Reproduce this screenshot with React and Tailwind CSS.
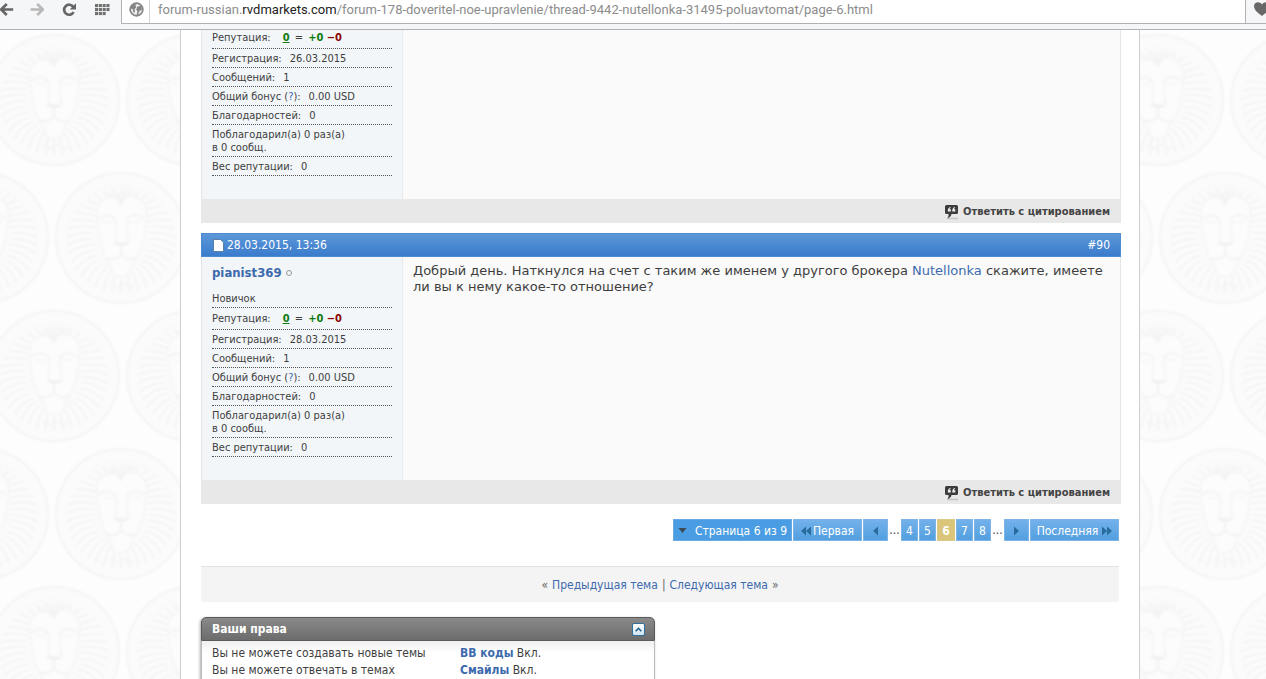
const RAYS = Array.from({ length: 76 }, (_, i) => {
  const a = (i / 76) * Math.PI * 2;
  const x = Math.sin(a);
  const y = -Math.cos(a);
  return {
    d: `M${(x * 29).toFixed(1)} ${(y * 36 - 2).toFixed(1)} Q${(x * 42).toFixed(1)} ${(y * 40 - 3).toFixed(1)} ${(x * 54).toFixed(1)} ${(y * 52 + 3).toFixed(1)}`,
    dark: i % 2 === 0,
  };
});

function Lions() {
  return (
    <svg className="absolute inset-0 size-full" aria-hidden="true">
      <defs>
        <filter id="soft" x="-10%" y="-10%" width="120%" height="120%">
          <feGaussianBlur stdDeviation="0.9" />
        </filter>
        <g id="lion" fill="none" strokeLinecap="round" filter="url(#soft)">
          <circle r="65" fill="#fbfbfc" stroke="#f4f4f6" strokeWidth="2" />
          <circle r="57" fill="#fafafa" stroke="#fcfcfd" strokeWidth="2" />
          {RAYS.map((r, i) => (
            <path key={i} d={r.d} stroke={r.dark ? "#f5f5f5" : "#fcfcfc"} strokeWidth="2" />
          ))}
          <path d="M-24 -22C-26 -34 -16 -44 0 -40C18 -46 28 -34 25 -20C25 -8 22 10 15 20C10 25 11 30 8 36Q0 42 -8 36C-9 30 -10 26 -15 21C-20 10 -24 -8 -24 -22Z" fill="#fcfcfd" stroke="#f6f6f7" strokeWidth="2" />
          <path d="M-14 -44Q-5 -42 0 -34Q6 -46 14 -46M-6 -48Q-2 -42 0 -36Q4 -44 5 -50" stroke="#f2f2f3" strokeWidth="1.5" />
          <path d="M-22 -20Q-13 -26 -6 -19M22 -20Q13 -26 6 -19" stroke="#f5f5f7" strokeWidth="2.5" />
          <path d="M-19 -17Q-13 -14 -8 -17M19 -17Q13 -14 8 -17" stroke="#f6f6f8" strokeWidth="1.5" />
          <path d="M-5 -18L-5 4M6 -18L7 4" stroke="#f5f5f7" strokeWidth="2" />
          <path d="M-7 5Q0 10 8 5Z" fill="#f0f0f0" stroke="#f1f1f1" />
          <path d="M0 9V15M-14 20Q-6 24 0 16Q6 24 15 20" stroke="#f3f3f4" strokeWidth="2" />
          <path d="M-11 46Q-8 43 -6 47T0 47T6 47T12 47" stroke="#f3f3f3" strokeWidth="1.5" />
        </g>
        <pattern id="lions" width="138" height="276" patternUnits="userSpaceOnUse">
          <rect width="138" height="276" fill="#fdfdfd" />
          <use href="#lion" x="54" y="70" />
          <use href="#lion" x="192" y="70" />
          <use href="#lion" x="-17" y="208" />
          <use href="#lion" x="121" y="208" />
        </pattern>
      </defs>
      <rect width="100%" height="100%" fill="url(#lions)" />
    </svg>
  );
}

function Toolbar() {
  return (
    <header className="flex h-[30px] shrink-0 overflow-hidden border-b border-[#b0b2b5] bg-[#f5f6f7]">
      <div className="flex w-[121px] shrink-0 items-start pt-[3px]">
        <button aria-label="Back">
          <svg width="14" height="13" viewBox="0 0 14 13">
            <path d="M6.800 1L1.200 6.500L6.800 12M1.500 6.500H13.200" fill="none" stroke="#666" strokeWidth="2.600" />
          </svg>
        </button>
        <button aria-label="Forward" className="ml-4">
          <svg width="14" height="13" viewBox="0 0 14 13">
            <path d="M7.200 1L12.800 6.500L7.200 12M12.500 6.500H0.500" fill="none" stroke="#b8b8b8" strokeWidth="2.600" />
          </svg>
        </button>
        <button aria-label="Reload" className="ml-[18px]">
          <svg width="15" height="14" viewBox="0 0 15 14">
            <path d="M11.200 3.800A5 5 0 1 0 11.600 9" fill="none" stroke="#666" strokeWidth="2.700" />
            <path d="M14 0.200V6.400H7.600Z" fill="#666" />
          </svg>
        </button>
        <button aria-label="Apps" className="ml-[18px] pt-px">
          <svg width="15" height="12" viewBox="0 0 15 12" fill="#707070">
            {[0, 4, 8].map((y) =>
              [0, 3.8, 7.6, 11.4].map((x) =>
                y === 8 && x > 11 ? null : <rect key={`${x}-${y}`} x={x} y={y} width="3.1" height="3.1" />
              )
            )}
          </svg>
        </button>
      </div>
      <div className="flex h-6 min-w-0 flex-1 border-b border-l border-[#b0b2b5] bg-white pl-[7px]">
        <svg className="mt-0.5 shrink-0" width="15" height="15" viewBox="0 0 15 15">
          <circle cx="7.500" cy="7.500" r="6.300" fill="#f0f0f0" stroke="#858585" strokeWidth="1.800" />
          <path d="M2 4.500Q4 2 7.500 2L6.500 4L7.500 5.500L5.500 7L6 9L5 11.500L4 9L4.200 7.500L2 6.500ZM8.500 4.500L12 3.800L13 7.500L10.500 9L9 13L7.500 13L8.500 9.500L7.200 7.500Z" fill="#858585" />
        </svg>
        <div
          role="textbox"
          aria-label="Address"
          className="ml-[5px] min-w-0 flex-1 overflow-hidden border-l border-[#d4d4d4] pl-2 font-[Roboto,'Open_Sans',sans-serif] text-[13px] leading-[19px] whitespace-nowrap text-[#8c8c8c]"
        >
          forum-russian.<span className="text-[#222]">rvdmarkets.com</span>
          /forum-178-doveritel-noe-upravlenie/thread-9442-nutellonka-31495-poluavtomat/page-6.html
        </div>
      </div>
      <div className="flex h-6 w-[21px] shrink-0 overflow-hidden border-b border-l border-[#b0b2b5] pl-2">
        <button aria-label="Bookmark" className="mt-0.5 h-[14px] w-4 shrink-0">
          <svg width="16" height="14" viewBox="0 0 16 14">
            <path d="M8 14C4 11 0 8 0 4C0 -0.500 6 -1 8 2.500C10 -1 16 -0.500 16 4C16 8 12 11 8 14Z" fill="#686868" />
          </svg>
        </button>
      </div>
    </header>
  );
}

function Row({ label, children, tall }) {
  return (
    <div className={`flex border-b border-dotted border-[#555] ${tall ? "h-[22px] pt-1" : "h-[19px] pt-[3px]"}`}>
      <dt>{label}</dt>
      <dd className="ml-2">{children}</dd>
    </div>
  );
}

function UserStats({ date }) {
  return (
    <dl>
      <Row tall label="Репутация:">
        <span className="ml-1 font-bold text-[#0f7a0f]">
          <a href="#rep" className="underline">0</a>
          <span className="mx-0.5 font-normal text-[#3e3e3e]"> = </span>+0 <span className="text-[#8b0000]">−0</span>
        </span>
      </Row>
      <Row label="Регистрация:">{date}</Row>
      <Row label="Сообщений:">1</Row>
      <Row label={<>Общий бонус (<a href="#bonus" className="text-[#3d6aad]">?</a>):</>}>0.00 USD</Row>
      <Row label="Благодарностей:">0</Row>
      <div className="h-8 border-b border-dotted border-[#555] pt-[3px]">
        Поблагодарил(а) 0 раз(а)
        <br />в 0 сообщ.
      </div>
      <Row label="Вес репутации:">0</Row>
    </dl>
  );
}

function PostBody({ user, children }) {
  return (
    <div className="flex shrink-0 border-x border-[#e4e6e8] bg-[#fafafa]">
      <div className="w-[201px] shrink-0 border-r border-[#e8eaec] bg-[#f2f6f9] px-2.5 pb-[23px] text-[11px] leading-[13px] text-[#3e3e3e]">
        {user}
      </div>
      <div className="min-w-0 flex-1 px-2.5 pt-1.5 font-['DejaVu_Sans',sans-serif] text-[13px] leading-4 text-[#3e3e3e]">{children}</div>
    </div>
  );
}

function PostFooter() {
  return (
    <div className="flex h-6 items-center justify-end bg-[#e8e8e8] pt-0.5 pr-[11px]">
      <a href="#reply" className="flex items-center gap-1 text-[11px] font-bold text-[#444]">
        <svg width="15" height="15" viewBox="0 0 15 15">
          <path d="M3 13.500H14" stroke="#c4c4c4" strokeWidth="1.500" />
          <path d="M2.500 0H12.500Q14 0 14 1.500V7.500Q14 9 12.500 9H7.500Q7 12 3.500 13Q5 11.500 4.500 9H2.500Q1 9 1 7.500V1.500Q1 0 2.500 0Z" fill="#3c3c3c" />
          <path d="M6.500 2Q3.500 2.500 3.800 6.500H6.800V4.300H5.400Q5.600 3.200 6.500 3ZM11 2Q8 2.500 8.300 6.500H11.300V4.300H9.900Q10.100 3.200 11 3Z" fill="#f0f0f0" />
        </svg>
        Ответить с цитированием
      </a>
    </div>
  );
}

const PAGE = "flex h-[22px] items-center justify-center border border-[#7fb4e6] bg-linear-to-b from-[#73b1ea] to-[#529fe0] pt-px text-white";

function Tri({ left, double }) {
  return (
    <svg width={double ? 10 : 5} height="10" viewBox={double ? "0 0 10 10" : "0 0 5 10"} fill="#2a6b9e" aria-hidden="true">
      <g transform={left ? `translate(${double ? 10 : 5} 0) scale(-1 1)` : undefined}>
        <path d="M0 0.500L5 5L0 9.500Z" />
        {double && <path d="M5 0.500L10 5L5 9.500Z" />}
      </g>
    </svg>
  );
}

function Pagination() {
  return (
    <nav className="mt-[15px] mr-0.5 flex justify-end gap-px text-[12px] leading-[14px] text-[#444]">
      <button className="flex h-[22px] w-[119px] items-center justify-between border border-[#6aaae4] bg-[#4a9de2] px-1 pt-px text-white">
        <svg width="9" height="5" viewBox="0 0 9 5" aria-hidden="true">
          <path d="M0.500 0H8.500L4.500 5Z" fill="#3c4a55" />
        </svg>
        Страница 6 из 9
      </button>
      <a href="#first" className={`${PAGE} w-[69px] gap-0.5`}><Tri left double />Первая</a>
      <a href="#prev" aria-label="Предыдущая" className={`${PAGE} w-[25px]`}><Tri left /></a>
      <span className="w-[11px] pt-1 text-center">...</span>
      <a href="#4" className={`${PAGE} w-[17px]`}>4</a>
      <a href="#5" className={`${PAGE} w-[17px]`}>5</a>
      <span className="flex h-[22px] w-[18px] items-center justify-center border border-[#d8c986] bg-[#dac57a] pt-px font-bold text-white">6</span>
      <a href="#7" className={`${PAGE} w-[17px]`}>7</a>
      <a href="#8" className={`${PAGE} w-[17px]`}>8</a>
      <span className="w-[11px] pt-1 text-center">...</span>
      <a href="#next" aria-label="Следующая" className={`${PAGE} w-[25px]`}><Tri /></a>
      <a href="#last" className={`${PAGE} w-[89px] gap-1`}>Последняя<Tri double /></a>
    </nav>
  );
}

function Rights() {
  return (
    <section className="mt-[15px] w-[454px] rounded-t-[5px] text-[12px] leading-[17px] text-[#3e3e3e] shadow-[-1px_1px_3px_#aaa]">
      <div className="flex h-6 items-center justify-between rounded-t-[5px] border border-[#5a5a5a] bg-linear-to-b from-[#8a8a8a] to-[#6c6c6c] pr-[9px] pl-2.5">
        <h2 className="text-[12px] font-bold text-white">Ваши права</h2>
        <button aria-label="Свернуть" className="flex h-[13px] w-[13px] items-center justify-center rounded-[2px] border border-[#2f719c] bg-linear-to-b from-white to-[#cfe4f2]">
          <svg width="7" height="5" viewBox="0 0 7 5">
            <path d="M0.700 4.200L3.500 1.300L6.300 4.200" fill="none" stroke="#1e5f8c" strokeWidth="1.600" />
          </svg>
        </button>
      </div>
      <div className="grid h-20 grid-cols-[248px_1fr] content-start border-x border-[#bbb] bg-linear-to-b from-[#f0f0f0] to-white to-15% pt-1 pl-2.5">
        <span>Вы не можете создавать новые темы</span>
        <span><a href="#bb" className="font-bold text-[#3d6aad]">BB коды</a> Вкл.</span>
        <span>Вы не можете отвечать в темах</span>
        <span><a href="#smiles" className="font-bold text-[#3d6aad]">Смайлы</a> Вкл.</span>
      </div>
    </section>
  );
}

export default function App() {
  return (
    <div className="flex h-screen flex-col overflow-hidden bg-white font-['DejaVu_Sans_Condensed','DejaVu_Sans',sans-serif]">
      <Toolbar />
      <div className="relative min-h-0 flex-1 overflow-hidden pr-[126px] pl-[180px]">
        <Lions />
        <main className="relative h-full border-x border-[#cfcfcf] bg-white pr-[18px] pl-5">
          <article>
            <div className="flex h-[169px] flex-col justify-end overflow-hidden">
              <PostBody user={<UserStats date="26.03.2015" />} />
            </div>
            <PostFooter />
          </article>
          <article className="mt-2.5">
            <div className="flex h-6 items-center justify-between border border-[#4f8bd0] bg-linear-to-b from-[#5c97d8] to-[#3a7bcc] pr-2.5 pl-[11px] text-[12px] text-white">
              <span className="flex items-center gap-[3px]">
                <svg width="11" height="13" viewBox="0 0 11 13" aria-hidden="true">
                  <path d="M0.500 0.500H7.500L10.500 3.500V12.500H0.500Z" fill="#fff" stroke="#5a7fa8" />
                </svg>
                28.03.2015, 13:36
              </span>
              <a href="#90">#90</a>
            </div>
            <PostBody
              user={
                <>
                  <div className="flex items-center gap-1 pt-2">
                    <a href="#user" className="text-[13px] leading-4 font-bold text-[#3d6aad]">pianist369</a>
                    <span className="size-1.5 rounded-full border border-[#999]" />
                  </div>
                  <div className="mt-[11px] h-4 border-b border-dotted border-[#555]">Новичок</div>
                  <UserStats date="28.03.2015" />
                </>
              }
            >
              Добрый день. Наткнулся на счет с таким же именем у другого брокера{" "}
              <a href="#nutellonka" className="text-[#3d6aad]">Nutellonka</a> скажите, имеете ли вы к нему какое-то отношение?
            </PostBody>
            <PostFooter />
          </article>
          <Pagination />
          <nav className="mt-[25px] mr-0.5 flex h-9 items-center justify-center gap-1 border-t border-[#e2e2e2] bg-[#f4f4f4] text-[12px] text-[#666]">
            <span>«</span>
            <a href="#prev-thread" className="text-[#3d6aad]">Предыдущая тема</a>
            <span>|</span>
            <a href="#next-thread" className="text-[#3d6aad]">Следующая тема</a>
            <span>»</span>
          </nav>
          <Rights />
        </main>
      </div>
    </div>
  );
}
